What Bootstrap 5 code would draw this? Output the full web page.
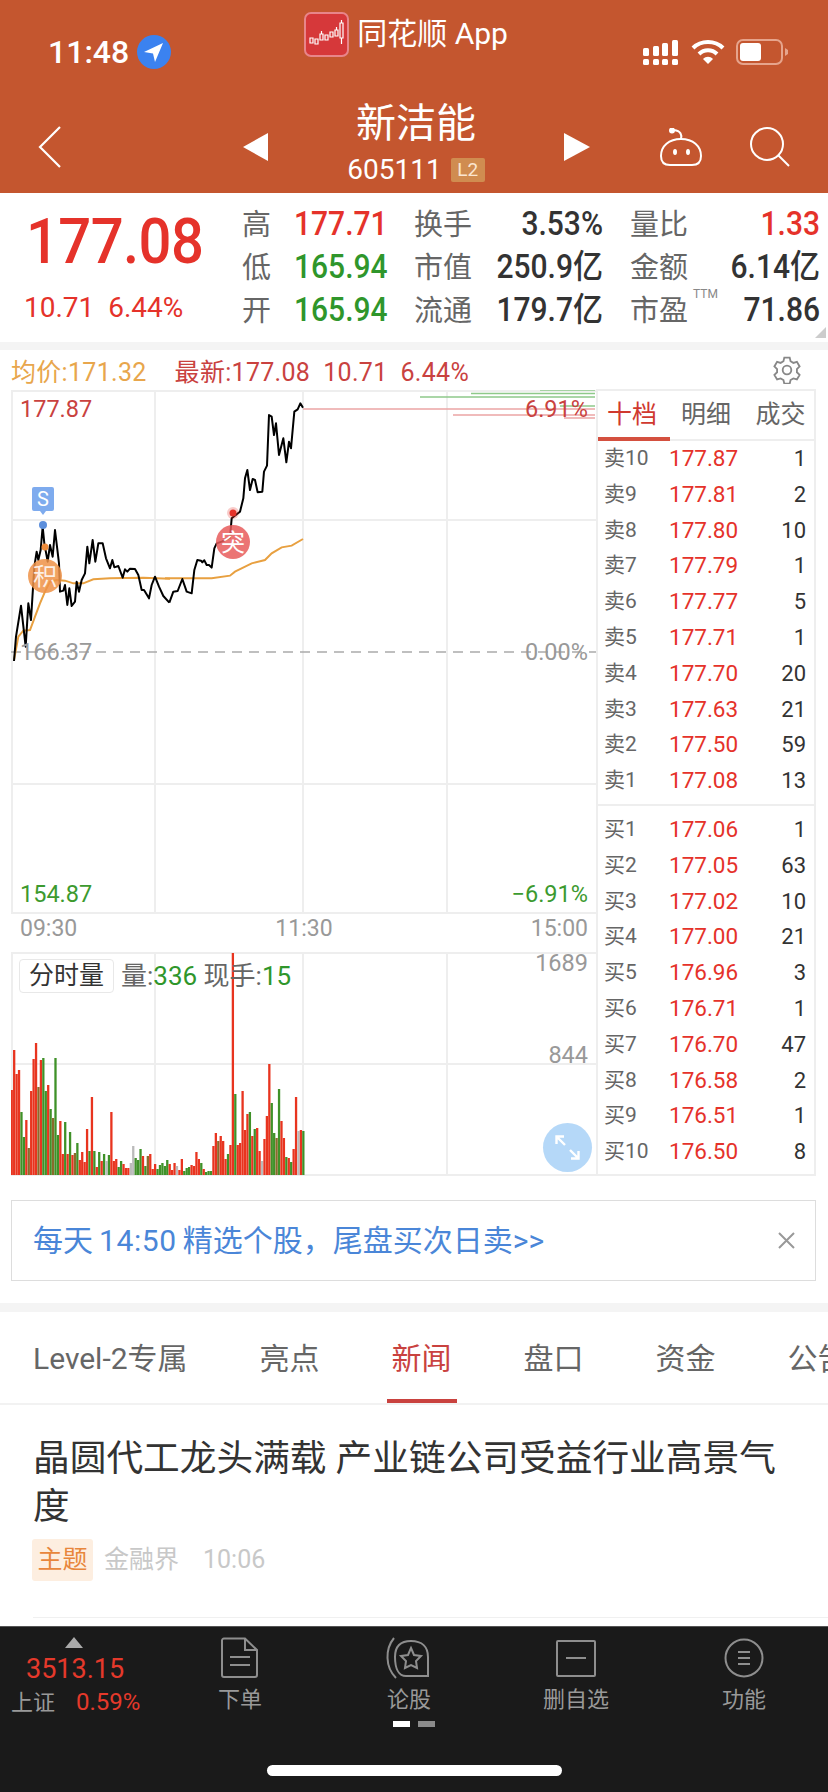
<!DOCTYPE html>
<html lang="zh-CN">
  <head>
    <meta charset="UTF-8" />
    <meta name="viewport" content="width=device-width, initial-scale=1.0" />
    <title>新洁能</title>
    <link href="https://cdn.jsdelivr.net/npm/bootstrap@5.3.2/dist/css/bootstrap.min.css" rel="stylesheet" />
    <style>
      body {
        width: 828px;
        height: 1792px;
        overflow: hidden;
        background: #fff;
        font-family: Roboto, "Noto Sans CJK SC", sans-serif;
        color: #333;
      }
      .page-wrap { width: 828px; height: 1792px; }
      .c-red { color: #e5322a; }
      .c-green { color: #2f962b; }
      .c-gray { color: #666; }

      /* header */
      .top-head { background: #c4562f; height: 193px; color: #fff; }
      .status-row { height: 100px; padding: 4px 40px 0 48px; }
      .clock { font-size: 32px; font-weight: 500; line-height: 1; }
      .app-tag { margin-bottom: 36px; font-size: 30px; line-height: 44px; margin-left: -1px; }
      .status-icons { gap: 11px; }
      .nav-row { height: 93px; padding-left: 38px; }
      .tri-left { margin-left: 181px; }
      .nav-robot { margin-left: 69px; }
      .nav-search { margin-left: 47px; }
      .stock-title { font-size: 40px; line-height: 44px; margin-top: -1px; }
      .stock-code { font-size: 28px; line-height: 40px; margin-top: 4px; }
      .l2-tag { background: #d08c50; font-size: 19px; line-height: 24px; width: 34px; margin-left: 9px; border-radius: 2px; color: #fbe6d0; }
      .title-box { width: 296px; }

      /* quote */
      .quote-box { height: 149px; }
      .price-side { width: 242px; padding-left: 26px; }
      .big-price { font-size: 58px; font-weight: 500; line-height: 60px; margin-top: 18px; letter-spacing: -.6px; transform: scaleY(1.08); }
      .price-change { font-size: 28px; line-height: 32px; margin-top: 21px; margin-left: -2px; white-space: nowrap; }
      .stat-grid { display: grid; grid-template-columns: 52px 120px 56px 133px 84px 133px; grid-auto-rows: 43px; padding-top: 9px; align-items: center; }
      .stat-lab { font-size: 29px; color: #666; line-height: 43px; padding-top: 3px; white-space: nowrap; }
      .stat-lab.last-col { padding-left: 27px; }
      .stat-val { font-size: 30px; font-weight: 500; line-height: 43px; transform: scaleY(1.1); white-space: nowrap; }
      .ttm-sup { position: absolute; left: 90px; top: 0; font-size: 12px; line-height: 14px; color: #888; }
      .corner-tri { position: absolute; right: 2px; bottom: 4px; width: 0; height: 0; border-left: 11px solid transparent; border-bottom: 11px solid #ccc; }
      .gap-bar { height: 8px; background: #f4f4f4; }
      .gap-bar.wide-gap { height: 9px; }

      /* chart */
      .chart-top { height: 40px; padding: 5px 0 0 11px; font-size: 25px; line-height: 36px; letter-spacing: .3px; }
      .c-avg { color: #e8a64c; }
      .c-last { color: #c9423f; margin-left: 28px; }
      .gear-icon { position: absolute; left: 773px; top: 6px; }
      .chart-col { width: 585px; margin-left: 11px; }
      .main-chart { height: 524px; }
      .vol-chart { height: 224px; }
      .main-chart svg, .vol-chart svg { position: absolute; left: 0; top: 0; }
      .ax-lab { position: absolute; font-size: 23.5px; line-height: 28px; }
      .ax-left { left: 9px; }
      .ax-right { right: 8px; }
      .ax-top { top: 5px; }
      .ax-mid { top: 248px; }
      .ax-low { top: 490px; }
      .ax-up { color: #c9423f; }
      .ax-base { color: #999; }
      .ax-down { color: #3c9a2f; }
      .vol-top { top: -3px; }
      .vol-half { top: 89px; }
      .time-axis { height: 38px; padding: 0 8px 0 9px; font-size: 23px; line-height: 30px; color: #999; display: grid; grid-template-columns: 1fr auto 1fr; }
      .vol-btn { position: absolute; left: 8px; top: 7px; width: 95px; height: 34px; border: 1px solid #e8e8e8; border-radius: 4px; font-size: 25px; line-height: 32px; text-align: center; background: #fff; color: #333; }
      .vol-text { position: absolute; left: 110px; top: 9px; font-size: 26px; line-height: 30px; color: #666; white-space: nowrap; }
      .grow-btn { position: absolute; left: 532px; top: 171px; width: 49px; height: 49px; border-radius: 50%; background: #b5d8f8; }
      .vol-chart .grow-btn svg { left: 12px; top: 12px; }

      /* order book */
      .book-panel { width: 220px; height: 787px; margin-top: -1px; border: 2px solid #eee; }
      .book-tabs { height: 50px; border-bottom: 2px solid #eee; font-size: 25px; }
      .book-tab { width: 72.6px; text-align: center; line-height: 48px; color: #666; }
      .book-tab.on { color: #d0392f; border-bottom: 4px solid #d4503f; height: 50px; padding-right: 4px; }
      .book-tab.tail { padding-left: 5px; }
      .book-line { height: 35.8px; line-height: 35.8px; padding: 0 8px 0 6px; }
      .book-lab { width: 65px; font-size: 21px; color: #666; }
      .book-price { font-size: 22.5px; color: #e5322a; }
      .book-qty { font-size: 22px; margin-left: auto; color: #333; }
      .book-split { height: 2px; background: #eee; margin: 5px 0 6px; }

      /* banner and news */
      .promo-box { margin: 24px 12px 22px 11px; height: 81px; border: 1px solid #ddd; padding-left: 21px; font-size: 30px; color: #4a86d8; white-space: nowrap; }
      .promo-num { margin: 0 6px; letter-spacing: .6px; }
      .promo-x { margin-left: auto; margin-right: 20px; }
      .news-tabs { height: 93px; border-bottom: 2px solid #f2f2f2; font-size: 30px; color: #666; padding-left: 33px; overflow: hidden; white-space: nowrap; gap: 72px; }
      .news-tab { position: relative; line-height: 93px; }
      .news-tab.on { color: #c9423f; }
      .news-tab.on::after { content: ""; position: absolute; left: -5px; right: -5px; bottom: 0; height: 4px; background: #c9423f; }
      .news-title { font-size: 36.7px; line-height: 48px; color: #333; margin: 30px 0 0 33px; width: 765px; }
      .news-meta { margin: 8px 0 0 32px; font-size: 25px; color: #c8c8c8; }
      .topic-tag { background: #fdeee0; color: #e8863c; width: 61px; height: 42px; line-height: 42px; text-align: center; border-radius: 3px; margin-right: 11px; }
      .news-rule { margin: 36px 0 0 33px; height: 1px; background: #f0f0f0; }

      /* bottom bar */
      .dock { margin-top: auto; height: 166px; background: #1a1a1a; border-top: 1px solid #555; color: #999; }
      .dock-index { width: 156px; position: relative; }
      .index-tri { position: absolute; left: 65px; top: 10px; width: 0; height: 0; border-left: 9.5px solid transparent; border-right: 9.5px solid transparent; border-bottom: 11px solid #aaa; }
      .index-num { position: absolute; left: 26px; top: 24px; font-size: 27px; line-height: 36px; color: #e5392b; }
      .index-sub { position: absolute; left: 11px; top: 60px; width: 145px; line-height: 30px; font-size: 22px; color: #999; white-space: nowrap; }
      .index-pct { font-size: 24px; color: #e5392b; margin-left: 21px; }
      .dock-item { width: 168px; text-align: center; font-size: 22px; padding-top: 10px; }
      .dock-item svg { display: block; margin: 0 auto; }
      .dock-item svg.talk-icon { margin-left: 62px; }
      .dock-item span { display: block; line-height: 30px; margin-top: 6px; }
      .talk-label { padding-left: 2px; }
      .dot-pair { margin: 6px 0 0 11px; }
      .dot-pair i { width: 17px; height: 6px; background: #8b8b8b; }
      .dot-pair i.on { background: #fff; }
      .home-bar { width: 295px; height: 11px; background: #fff; border-radius: 6px; position: absolute; left: 267px; top: 138px; }
    </style>
  </head>
  <body>
    <div class="page-wrap d-flex flex-column">
      <div class="top-head">
        <div class="status-row d-flex justify-content-between align-items-center">
          <div class="d-flex align-items-center">
            <span class="clock">11:48</span>
            <svg class="ms-2" width="34" height="34" viewBox="0 0 34 34"><circle cx="17" cy="17" r="17" fill="#3b82f0"/><path d="M26 8 L7 17 L16 18.5 L18 27 Z" fill="#fff"/></svg>
          </div>
          <div class="d-flex align-items-center app-tag">
            <svg class="me-2" width="45" height="45" viewBox="0 0 45 45">
              <rect x="1" y="1" width="43" height="43" rx="6" fill="#d6383a" stroke="#e8858a" stroke-width="2"/>
              <g fill="none" stroke="#fff" stroke-width="1.2">
                <path d="M6 26 h3 v5 h-3 z M11 27 h3 v5 h-3 z M16 22 h3 v6 h-3 z M21 23 h3 v5 h-3 z M26 20 h3 v5 h-3 z M31 18 h3 v6 h-3 z M36 11 h3 v15 h-3 z M37.5 8 v3 M37.5 26 v6 M17.5 19 v3 M32.5 15 v3"/>
              </g>
            </svg>
            <span>同花顺 App</span>
          </div>
          <div class="d-flex align-items-center status-icons">
            <svg width="38" height="28" viewBox="0 0 38 28" fill="#fff">
              <rect x="1" y="10" width="6" height="8" rx="1.5"/><rect x="11" y="8" width="6" height="10" rx="1.5"/><rect x="20" y="5" width="6" height="13" rx="1.5"/><rect x="30" y="2" width="6" height="16" rx="1.5"/>
              <rect x="1" y="21" width="6" height="6" rx="1.5"/><rect x="11" y="21" width="6" height="6" rx="1.5"/><rect x="20" y="21" width="6" height="6" rx="1.5"/><rect x="30" y="21" width="6" height="6" rx="1.5"/>
            </svg>
            <svg width="34" height="26" viewBox="0 0 34 26" fill="none" stroke="#fff" stroke-width="4"><path d="M2 9 C10 1 24 1 32 9"/><path d="M8 15 C13 10 21 10 26 15"/><path d="M17 25 L12 20 C15 17 19 17 22 20 Z" fill="#fff" stroke="none"/></svg>
            <svg width="52" height="26" viewBox="0 0 52 26"><rect x="1" y="1" width="45" height="24" rx="6" fill="none" stroke="#e6a48c" stroke-width="2"/><rect x="4" y="4" width="21" height="18" rx="3" fill="#fff"/><path d="M49 9 L52 11 V15 L49 17 Z" fill="#e6a48c"/></svg>
          </div>
        </div>
        <div class="nav-row d-flex align-items-center">
          <svg width="24" height="42" viewBox="0 0 24 42" fill="none" stroke="#fff" stroke-width="2.2"><path d="M22 1 L2 21 L22 41"/></svg>
          <svg class="tri-left" width="25" height="28" viewBox="0 0 25 28"><path d="M25 0 V28 L0 14 Z" fill="#fff"/></svg>
          <div class="title-box text-center">
            <div class="stock-title">新洁能</div>
            <div class="stock-code d-flex justify-content-center align-items-center"><span>605111</span><span class="l2-tag">L2</span></div>
          </div>
          <svg width="26" height="28" viewBox="0 0 26 28"><path d="M0 0 V28 L26 14 Z" fill="#fff"/></svg>
          <svg class="nav-robot" width="44" height="38" viewBox="0 0 44 38" fill="none" stroke="#fff" stroke-width="2"><path d="M22 11 C23 7 22 3 15 2"/><circle cx="13" cy="2.5" r="2" fill="#fff"/><path d="M2 28 C2 18 10 11 22 11 C34 11 42 18 42 28 C42 34 39 37 33 37 H11 C5 37 2 34 2 28 Z"/><ellipse cx="16" cy="24" rx="2" ry="3" fill="#fff" stroke="none"/><ellipse cx="29" cy="24" rx="2" ry="3" fill="#fff" stroke="none"/></svg>
          <svg class="nav-search" width="40" height="40" viewBox="0 0 40 40" fill="none" stroke="#fff" stroke-width="2"><circle cx="17" cy="17" r="16"/><path d="M28 28 L39 39"/></svg>
        </div>
      </div>

      <div class="quote-box d-flex position-relative">
        <div class="price-side">
          <div class="big-price c-red">177.08</div>
          <div class="price-change c-red">10.71&nbsp;&nbsp;6.44%</div>
        </div>
        <div class="stat-grid">
          <div class="stat-lab">高</div><div class="stat-val c-red">177.71</div><div class="stat-lab">换手</div><div class="stat-val text-end">3.53%</div><div class="stat-lab last-col">量比</div><div class="stat-val text-end c-red">1.33</div>
          <div class="stat-lab">低</div><div class="stat-val c-green">165.94</div><div class="stat-lab">市值</div><div class="stat-val text-end">250.9亿</div><div class="stat-lab last-col">金额</div><div class="stat-val text-end">6.14亿</div>
          <div class="stat-lab">开</div><div class="stat-val c-green">165.94</div><div class="stat-lab">流通</div><div class="stat-val text-end">179.7亿</div><div class="stat-lab last-col position-relative">市盈<span class="ttm-sup">TTM</span></div><div class="stat-val text-end">71.86</div>
        </div>
        <div class="corner-tri"></div>
      </div>
      <div class="gap-bar"></div>

      <div class="chart-top d-flex position-relative">
        <span class="c-avg">均价:171.32</span>
        <span class="c-last">最新:177.08&nbsp;&nbsp;10.71&nbsp;&nbsp;6.44%</span>
        <svg class="gear-icon" width="28" height="28" viewBox="0 0 26 26" fill="none" stroke="#888" stroke-width="1.7"><path d="M10.5 1.5 h5 l.8 3.4 2.6 1.5 3.3-1 2.5 4.3-2.5 2.4 v3 l2.5 2.4-2.5 4.3-3.3-1-2.6 1.5-.8 3.4 h-5 l-.8-3.4-2.6-1.5-3.3 1-2.5-4.3 2.5-2.4 v-3 l-2.5-2.4 2.5-4.3 3.3 1 2.6-1.5 z"/><circle cx="13" cy="13" r="4"/></svg>
      </div>

      <div class="d-flex">
        <div class="chart-col">
          <div class="main-chart position-relative">
            <svg width="585" height="524" viewBox="11 390 585 524" fill="none">
              <g stroke="#eee" stroke-width="2">
                <path d="M12 390 V914 M155 390 V914 M303 390 V914 M447 390 V914 M11 391 H596 M11 520 H596 M11 784 H596 M11 913 H596"/>
              </g>
              <path d="M11 652 H596" stroke="#aaa" stroke-width="1.5" stroke-dasharray="10 7"/>
              <g stroke-width="1.6">
                <path d="M540 390 H595 M471 393.5 H595" stroke="#8fc98a"/>
                <path d="M420 397 H595 M560 406 H595" stroke="#8fc98a"/>
                <path d="M303 409 H595 M453 415 H595 M564 418 H595" stroke="#eca5a5"/>
              </g>
              <g transform="translate(10 480) scale(.33333)">
                <polyline vector-effect="non-scaling-stroke" stroke="#e8a040" stroke-width="2" points="12,540 25,470 40,452 60,450 75,410 90,370 105,335 120,305 140,300 165,302 190,310 220,310 250,298 300,295 400,293 480,296"/>
                <polyline vector-effect="non-scaling-stroke" stroke="#000" stroke-width="2" stroke-linejoin="round" points="12,543 18,470 33,377 47,500 55,370 63,420 73,260 80,215 85,240 92,210 98,140 103,190 113,245 120,195 128,230 135,150 147,250 150,335 160,332 165,315 172,375 178,325 185,378 195,365 200,305 207,335 215,300 225,280 232,200 238,250 248,180 256,245 265,190 278,190 288,235 300,265 307,240 313,262 325,258 338,293 345,268 352,275 360,266 375,267 385,285 395,330 402,330 417,355 425,315 435,290 447,320 460,348 478,368"/>
              </g>
              <g transform="translate(165 395) scale(.33333)">
                <polyline vector-effect="non-scaling-stroke" stroke="#e8a040" stroke-width="2" points="0,550 140,550 195,542 210,530 260,505 300,495 320,475 350,457 380,452 414,432"/>
                <polyline vector-effect="non-scaling-stroke" stroke="#000" stroke-width="2" stroke-linejoin="round" points="13,623 25,590 38,588 52,552 65,590 80,595 88,525 97,495 108,497 112,502 118,496 125,510 132,510 140,518 148,460 155,445 170,440 195,428 200,370 215,358 225,350 235,310 240,250 247,225 255,285 263,252 270,255 278,292 292,290 297,230 306,212 312,60 320,65 327,120 333,85 342,180 355,130 364,202 372,140 378,160 388,50 398,43 406,25 414,38"/>
              </g>
              <path d="M34 487 h18 a2 2 0 0 1 2 2 v20 a2 2 0 0 1 -2 2 h-6 l-3 4 -3 -4 h-6 a2 2 0 0 1 -2 -2 v-20 a2 2 0 0 1 2 -2 z" fill="#7eabee"/>
              <text x="43" y="506" fill="#fff" font-size="20" text-anchor="middle">S</text>
              <circle cx="43" cy="525" r="4" fill="#5c8fdc"/>
              <circle cx="45" cy="547" r="3.5" fill="#ee8c3c"/>
              <circle cx="45" cy="576" r="17" fill="#ee9246" fill-opacity=".85"/>
              <text x="45" y="585" fill="#fff" fill-opacity=".85" font-size="24" text-anchor="middle">积</text>
              <circle cx="233" cy="513" r="6" fill="#e5322a" fill-opacity=".25"/>
              <circle cx="233" cy="513" r="3.5" fill="#e5322a"/>
              <circle cx="233" cy="542" r="17" fill="#e85c5c" fill-opacity=".85"/>
              <text x="233" y="551" fill="#fff" font-size="24" text-anchor="middle">突</text>
            </svg>
            <span class="ax-lab ax-left ax-top ax-up">177.87</span>
            <span class="ax-lab ax-right ax-top ax-up">6.91%</span>
            <span class="ax-lab ax-left ax-mid ax-base">166.37</span>
            <span class="ax-lab ax-right ax-mid ax-base">0.00%</span>
            <span class="ax-lab ax-left ax-low ax-down">154.87</span>
            <span class="ax-lab ax-right ax-low ax-down">−6.91%</span>
          </div>
          <div class="time-axis"><span>09:30</span><span>11:30</span><span class="text-end">15:00</span></div>
          <div class="vol-chart position-relative">
            <svg id="volSvg" width="585" height="224" viewBox="11 952 585 224" fill="none">
              <path d="M12 952 V1175 M155 952 V1175 M303 952 V1175 M447 952 V1175 M11 953 H596 M11 1064 H596 M11 1175 H596" stroke="#eee" stroke-width="2"/>
            </svg>
            <div class="vol-btn">分时量</div>
            <div class="vol-text">量:<span class="c-green">336</span> 现手:<span class="c-green">15</span></div>
            <span class="ax-lab ax-right vol-top ax-base">1689</span>
            <span class="ax-lab ax-right vol-half ax-base">844</span>
            <div class="grow-btn">
              <svg width="25" height="25" viewBox="0 0 25 25" fill="none" stroke="#fff" stroke-width="2.4"><path d="M1.5 9 V1.5 H9 M2 2 L10 10 M23.5 16 V23.5 H16 M23 23 L15 15"/></svg>
            </div>
          </div>
        </div>

        <div class="book-panel">
          <div class="book-tabs d-flex">
            <div class="book-tab on">十档</div><div class="book-tab">明细</div><div class="book-tab tail">成交</div>
          </div>
          <div class="book-line d-flex"><span class="book-lab">卖10</span><span class="book-price">177.87</span><span class="book-qty">1</span></div>
          <div class="book-line d-flex"><span class="book-lab">卖9</span><span class="book-price">177.81</span><span class="book-qty">2</span></div>
          <div class="book-line d-flex"><span class="book-lab">卖8</span><span class="book-price">177.80</span><span class="book-qty">10</span></div>
          <div class="book-line d-flex"><span class="book-lab">卖7</span><span class="book-price">177.79</span><span class="book-qty">1</span></div>
          <div class="book-line d-flex"><span class="book-lab">卖6</span><span class="book-price">177.77</span><span class="book-qty">5</span></div>
          <div class="book-line d-flex"><span class="book-lab">卖5</span><span class="book-price">177.71</span><span class="book-qty">1</span></div>
          <div class="book-line d-flex"><span class="book-lab">卖4</span><span class="book-price">177.70</span><span class="book-qty">20</span></div>
          <div class="book-line d-flex"><span class="book-lab">卖3</span><span class="book-price">177.63</span><span class="book-qty">21</span></div>
          <div class="book-line d-flex"><span class="book-lab">卖2</span><span class="book-price">177.50</span><span class="book-qty">59</span></div>
          <div class="book-line d-flex"><span class="book-lab">卖1</span><span class="book-price">177.08</span><span class="book-qty">13</span></div>
          <div class="book-split"></div>
          <div class="book-line d-flex"><span class="book-lab">买1</span><span class="book-price">177.06</span><span class="book-qty">1</span></div>
          <div class="book-line d-flex"><span class="book-lab">买2</span><span class="book-price">177.05</span><span class="book-qty">63</span></div>
          <div class="book-line d-flex"><span class="book-lab">买3</span><span class="book-price">177.02</span><span class="book-qty">10</span></div>
          <div class="book-line d-flex"><span class="book-lab">买4</span><span class="book-price">177.00</span><span class="book-qty">21</span></div>
          <div class="book-line d-flex"><span class="book-lab">买5</span><span class="book-price">176.96</span><span class="book-qty">3</span></div>
          <div class="book-line d-flex"><span class="book-lab">买6</span><span class="book-price">176.71</span><span class="book-qty">1</span></div>
          <div class="book-line d-flex"><span class="book-lab">买7</span><span class="book-price">176.70</span><span class="book-qty">47</span></div>
          <div class="book-line d-flex"><span class="book-lab">买8</span><span class="book-price">176.58</span><span class="book-qty">2</span></div>
          <div class="book-line d-flex"><span class="book-lab">买9</span><span class="book-price">176.51</span><span class="book-qty">1</span></div>
          <div class="book-line d-flex"><span class="book-lab">买10</span><span class="book-price">176.50</span><span class="book-qty">8</span></div>
        </div>
      </div>

      <div class="promo-box d-flex align-items-center">
        <span>每天<span class="promo-num">14:50</span>精选个股，尾盘买次日卖&gt;&gt;</span>
        <svg class="promo-x" width="17" height="17" viewBox="0 0 17 17" fill="none" stroke="#999" stroke-width="2"><path d="M1 1 L16 16 M16 1 L1 16"/></svg>
      </div>
      <div class="gap-bar wide-gap"></div>

      <div class="news-tabs d-flex">
        <span class="news-tab">Level-2专属</span>
        <span class="news-tab">亮点</span>
        <span class="news-tab on">新闻</span>
        <span class="news-tab">盘口</span>
        <span class="news-tab">资金</span>
        <span class="news-tab">公告</span>
      </div>
      <div class="news-title">晶圆代工龙头满载 产业链公司受益行业高景气度</div>
      <div class="news-meta d-flex align-items-center">
        <span class="topic-tag">主题</span><span>金融界</span><span class="ms-4">10:06</span>
      </div>
      <div class="news-rule"></div>

      <div class="dock d-flex position-relative">
        <div class="dock-index">
          <div class="index-tri"></div>
          <div class="index-num">3513.15</div>
          <div class="index-sub">上证<span class="index-pct">0.59%</span></div>
        </div>
        <div class="dock-item">
          <svg width="38" height="42" viewBox="0 0 38 42" fill="none" stroke="#8e8e8e" stroke-width="2"><path d="M3 1.5 H24 L36 13 V38 a2 2 0 0 1 -2 2 H3 a2 2 0 0 1 -2 -2 V3.5 a2 2 0 0 1 2 -2 Z M24 1.5 V13 H36 M9 20 H29 M9 28 H29"/></svg>
          <span>下单</span>
        </div>
        <div class="dock-item">
          <svg class="talk-icon" width="44" height="42" viewBox="0 0 44 42" fill="none" stroke="#8e8e8e" stroke-width="2"><path d="M8 1 C-1 12 -1 30 10 41"/><path d="M9 20 C9 9 15 4 25 4 C36 4 42 10 42 20 V39 H20 C13 39 9 32 9 20 Z"/><path d="M25 11 L28 18 L35 19 L30 24 L31 31 L25 28 L19 31 L20 24 L15 19 L22 18 Z"/></svg>
          <span class="talk-label">论股</span>
          <div class="dot-pair d-flex justify-content-center gap-2"><i class="on"></i><i></i></div>
        </div>
        <div class="dock-item">
          <svg width="42" height="42" viewBox="0 0 42 42" fill="none" stroke="#8e8e8e" stroke-width="2"><rect x="2" y="4" width="38" height="35" rx="1"/><path d="M11 21 H31"/></svg>
          <span>删自选</span>
        </div>
        <div class="dock-item">
          <svg width="40" height="42" viewBox="0 0 40 42" fill="none" stroke="#8e8e8e" stroke-width="2"><circle cx="20" cy="21" r="18.5"/><path d="M14 15 H26 M14 21 H26 M14 27 H26"/></svg>
          <span>功能</span>
        </div>
        <div class="home-bar"></div>
      </div>
    </div>

    <script>
      // volume bars: height, colour (r red, g green, s grey, b overlap)
      const volData = "85r 125r 101r 105r 63g 38g 55r 27b 84r 116r 132r 88b 115r 117g 84g 90r 66g 57b 117g 40g 54r 21r 53g 21r 43g 20r 22b 32g 15r 23r 13r 46r 24g 78r 24g 8r 23g 14r 21g 14s 20g 63r 14r 16r 8g 14g 11r 7r 7r 12s 29s 17g 15g 26g 19r 9g 19b 21r 6r 11r 6g 10g 12g 9g 15g 11r 5r 12r 9s 5r 16r 4g 7g 8g 10r 9r 23r 16r 12g 6r 3g 4g 4g 29r 42r 34b 39r 34r 16r 21g 30r 222r 81g 30r 32r 84r 45r 61r 63g 39r 46g 47r 24r 14s 36r 59r 111r 72g 42g 37b 86g 54r 37r 18g 17r 13g 26r 78r 44s 45r 44g".split(" ");
      const colors = { r: "#e8341f", g: "#3f9128", s: "#bbbbbb", b: "#8a6a2c" };
      const volSvg = document.getElementById("volSvg");
      volData.forEach(function (item, i) {
        const h = parseFloat(item);
        const rect = document.createElementNS("http://www.w3.org/2000/svg", "rect");
        rect.setAttribute("x", 10.6 + i * 2.43);
        rect.setAttribute("y", 1175 - h);
        rect.setAttribute("width", 2.3);
        rect.setAttribute("height", h);
        rect.setAttribute("fill", colors[item.slice(-1)]);
        volSvg.appendChild(rect);
      });
    </script>
    <script src="https://cdn.jsdelivr.net/npm/bootstrap@5.3.2/dist/js/bootstrap.bundle.min.js"></script>
  </body>
</html>
